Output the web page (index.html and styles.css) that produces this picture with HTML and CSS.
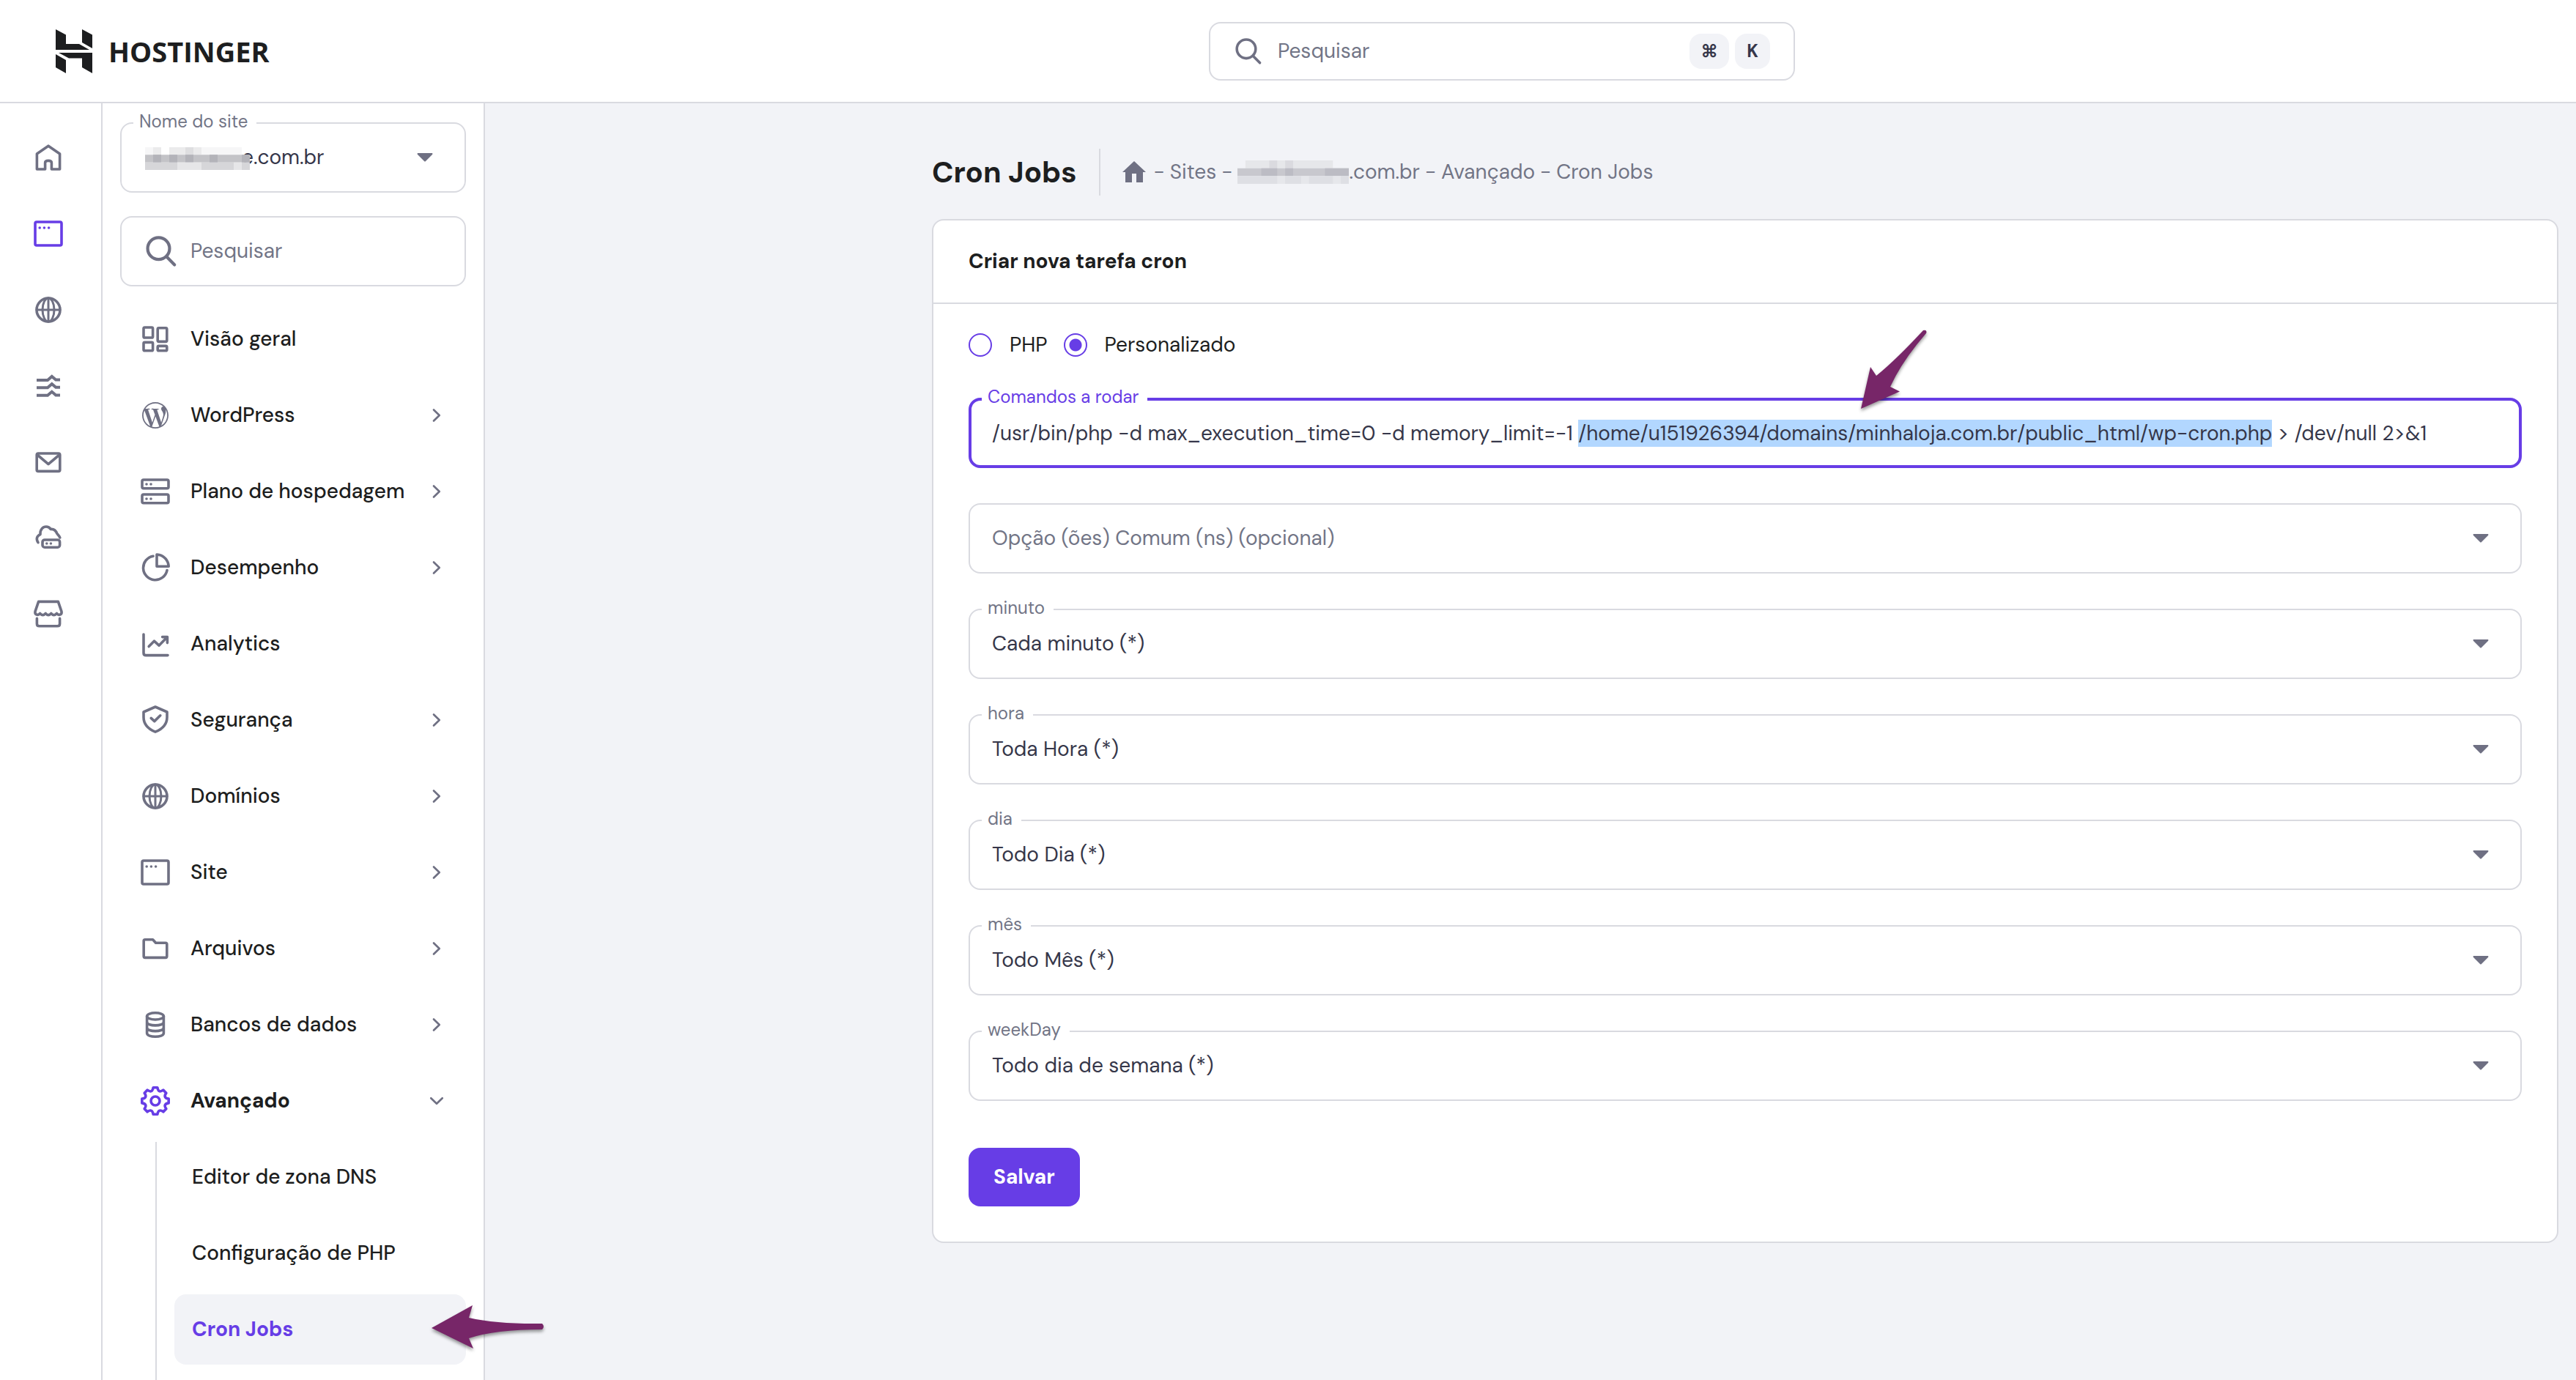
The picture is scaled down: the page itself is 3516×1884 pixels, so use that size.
FILE: index.html
```html
<!DOCTYPE html>
<html lang="pt-BR">
<head>
    <meta charset="UTF-8">
    <meta name="viewport" content="width=device-width, initial-scale=1.0">
    <title>Cron Jobs</title>
    <link rel="stylesheet" href="styles.css">
</head>
<body>

    <!-- Shared icons -->
    <svg class="sprite" aria-hidden="true">
        <symbol id="i-search" viewBox="0 0 24 24"><circle cx="10.5" cy="10.4" r="6.4"/><path d="M15.2 15.2l4.6 4.7"/></symbol>
        <symbol id="i-window" viewBox="0 0 24 24"><rect x="3" y="4" width="18" height="16" rx="1"/><g class="dot"><circle cx="6.1" cy="8" r=".9"/><circle cx="9.2" cy="8" r=".9"/><circle cx="12.3" cy="8" r=".9"/></g></symbol>
        <symbol id="i-globe" viewBox="0 0 24 24"><circle cx="12" cy="12" r="8"/><g class="thin"><ellipse cx="12" cy="12" rx="4" ry="8"/><path d="M12 4v16M4 12h16"/></g></symbol>
        <symbol id="i-right" viewBox="0 0 24 24"><path d="M9 6.4l5.8 5.6L9 17.6"/></symbol>
        <symbol id="i-down" viewBox="0 0 24 24"><path d="M6.2 9.2l5.8 5.6 5.8-5.6"/></symbol>
    </svg>

    <header class="topbar">
        <a href="#" class="logo">
            <svg viewBox="0 0 50 60" aria-hidden="true">
                <path d="M0 0l14 7.5V20h18l14 8H0zM36 0l14 7.5V26l-14-8zM4 32h46v28l-14-8V39.500H18zM0 34l14 8v18L0 52z"/>
            </svg>
            HOSTINGER
        </a>
        <div class="top-search">
            <svg class="icon"><use href="#i-search"/></svg>
            <input type="text" placeholder="Pesquisar" aria-label="Pesquisar">
            <kbd class="cmd">⌘</kbd>
            <kbd>K</kbd>
        </div>
    </header>

    <div class="layout">
        <nav class="rail" aria-label="Principal">
            <a href="#" aria-label="Início"><svg class="icon" viewBox="0 0 24 24"><path d="M4.2 20V9.5L12 4.1l7.8 5.4V20h-5.600v-4.400c0-.9-.8-1.400-2.200-1.400s-2.200.5-2.200 1.400V20z"/></svg></a>
            <a href="#" class="active" aria-label="Sites"><svg class="icon"><use href="#i-window"/></svg></a>
            <a href="#" aria-label="Domínios"><svg class="icon"><use href="#i-globe"/></svg></a>
            <a href="#" aria-label="Horizons"><svg class="icon" viewBox="0 0 24 24"><path class="flat" d="M4 8h7.500l2.900-2.500L17.100 7.800H20M4 13.100h7.500l2.900-2.500 2.700 2.300H20M4 18.400h7.500l2.900-2.500 2.700 2.300H20"/></svg></a>
            <a href="#" aria-label="Emails"><svg class="icon" viewBox="0 0 24 24"><rect x="4.100" y="6" width="15.800" height="12.200" rx="1"/><path d="M4.500 7l7.500 6.300L19.500 7"/></svg></a>
            <a href="#" aria-label="VPS"><svg class="icon" viewBox="0 1 24 24"><path d="M5 15.800C3.500 13.400 4 11.400 6.500 10.300 6.300 6.700 8.400 5 10.500 5c1.400 0 2.500.8 3.100 1.700 2.400-.3 3.500 1 4.300 3 1 1.100 1.700 1.800 2 2.800"/><rect x="8" y="14" width="11.800" height="5.100" rx="1.500"/><g class="dot"><circle cx="10.900" cy="16.500" r=".9"/><circle cx="13.700" cy="16.500" r=".9"/></g></svg></a>
            <a href="#" aria-label="Marketplace"><svg class="icon" viewBox="0 0 24 24"><path d="M5.300 3.200h13.400l2.300 6.700c.4 2.300-2 3-3.300 1.300-1.200 1.500-2.600 1.500-3.800 0-1.200 1.500-2.600 1.500-3.800 0-1.200 1.500-2.600 1.500-3.800 0-1.300 1.700-3.700 1-3.300-1.300zM4.200 14.700v3.500q0 1.700 1.700 1.700h12.200q1.700 0 1.700-1.700v-3.500"/></svg></a>
        </nav>

        <aside class="panel">
            <div class="field site-field">
                <label for="site">Nome do site</label>
                <select id="site"><option>e.com.br</option></select>
                <svg class="mask" viewBox="0 0 13 3" preserveAspectRatio="none" aria-hidden="true">
                    <path fill="#f6f6f7" d="M0 0h2v1H0zM7 0h5v1H7z"/><path fill="#ebebec" d="M1 0h1v1H1zM3 0h2v1H3zM6 0h1v1H6z"/><path fill="#dedee0" d="M5 0h1v1H5z"/>
                    <path fill="#c3c3c7" d="M0 1h13v1H0z"/><path fill="#b3b3b9" d="M1 1h1v1H1zM3 1h1v1H3zM5 1h1v1H5zM8 1h1v1H8zM12 1h1v1h-1z"/>
                    <path fill="#d6d6d9" d="M0 2h13v1H0z"/><path fill="#e6e6e8" d="M4 2h1v1H4zM5 2h1v1H5zM6 2h1v1H6zM11 2h1v1h-1z"/>
                </svg>
            </div>
            <div class="side-search">
                <svg class="icon"><use href="#i-search"/></svg>
                <input type="text" placeholder="Pesquisar" aria-label="Pesquisar no menu">
            </div>

            <nav class="menu" aria-label="Menu do site">
                <a href="#"><svg class="icon" viewBox="0 0 24 24"><rect x="4" y="4" width="6.300" height="7" rx=".8"/><rect x="13.600" y="4.400" width="6.300" height="9.300" rx=".8"/><rect x="4" y="14.200" width="6.300" height="5.700" rx=".8"/><rect x="13.600" y="16.700" width="6.300" height="3.200" rx=".8"/></svg><span>Visão geral</span></a>
                <a href="#"><svg class="icon solid" viewBox="-4 -4 32 32"><path d="M21.469 6.825c.84 1.537 1.318 3.3 1.318 5.175 0 3.979-2.156 7.456-5.363 9.325l3.295-9.527c.615-1.54.82-2.771.82-3.864 0-.405-.026-.78-.07-1.110m-7.981.105c.647-.03 1.232-.105 1.232-.105.582-.075.514-.93-.067-.899 0 0-1.755.135-2.880.135-1.064 0-2.850-.15-2.850-.15-.585-.03-.661.855-.075.885 0 0 .54.061 1.125.09l1.680 4.605-2.370 7.080L5.354 6.900c.649-.03 1.234-.1 1.234-.1.585-.075.516-.93-.065-.896 0 0-1.746.138-2.874.138-.2 0-.438-.008-.69-.015C4.911 3.150 8.235 1.215 12 1.215c2.809 0 5.365 1.072 7.286 2.833-.046-.003-.091-.009-.141-.009-1.060 0-1.812.923-1.812 1.914 0 .89.513 1.643 1.060 2.531.411.72.89 1.643.89 2.977 0 .915-.354 1.994-.821 3.479l-1.075 3.585-3.900-11.610.001.014zM12 22.784c-1.059 0-2.081-.153-3.048-.437l3.237-9.406 3.315 9.087c.024.053.05.101.078.149-1.120.393-2.325.609-3.582.609M1.211 12c0-1.564.336-3.050.935-4.390L7.290 21.709C3.694 19.960 1.212 16.271 1.211 12M12 0C5.385 0 0 5.385 0 12s5.385 12 12 12 12-5.385 12-12S18.615 0 12 0"/></svg><span>WordPress</span><svg class="chevron"><use href="#i-right"/></svg></a>
                <a href="#"><svg class="icon" viewBox="0 0 24 24"><rect x="3" y="4" width="18" height="5.900" rx="1"/><rect x="3" y="14" width="18" height="5.900" rx="1"/><g class="dot"><circle cx="6" cy="7" r=".9"/><circle cx="9" cy="7" r=".9"/><circle cx="6" cy="17" r=".9"/><circle cx="9" cy="17" r=".9"/></g></svg><span>Plano de hospedagem</span><svg class="chevron"><use href="#i-right"/></svg></a>
                <a href="#"><svg class="icon" viewBox="0 0 24 24"><path d="M13 3v8.100h8.100C20.800 6.600 17.500 3.300 13 3zM10.500 4.100a8.200 8.200 0 1 0 9.500 9.700"/></svg><span>Desempenho</span><svg class="chevron"><use href="#i-right"/></svg></a>
                <a href="#"><svg class="icon" viewBox="0 0 24 24"><path d="M4 5.500v12.700q0 1.600 1.600 1.600H20.500M7.600 13.800l3.600-3.700 3.300 3L20 7.500M16.800 7.300h3.400v4"/></svg><span>Analytics</span></a>
                <a href="#"><svg class="icon" viewBox="0 0 24 24"><path d="M12 3l8 3.500v3.600c0 4.800-3 7.900-8 10-5-2.100-8-5.200-8-10V6.500zM9.100 10.700l2.300 2.100 4-3.900"/></svg><span>Segurança</span><svg class="chevron"><use href="#i-right"/></svg></a>
                <a href="#"><svg class="icon"><use href="#i-globe"/></svg><span>Domínios</span><svg class="chevron"><use href="#i-right"/></svg></a>
                <a href="#"><svg class="icon"><use href="#i-window"/></svg><span>Site</span><svg class="chevron"><use href="#i-right"/></svg></a>
                <a href="#"><svg class="icon" viewBox="0 0 24 24"><path d="M5 5.900h5.300l2 2.200H19q.9 0 .9.900v8.300q0 .9-.9.900H5q-.9 0-.9-.9V6.800q0-.9.9-.9z"/></svg><span>Arquivos</span><svg class="chevron"><use href="#i-right"/></svg></a>
                <a href="#"><svg class="icon" viewBox="0 0 24 24"><ellipse cx="12" cy="6.200" rx="5.700" ry="2.300"/><path d="M6.300 6.200v11.600c0 3.100 11.400 3.100 11.400 0V6.200M6.300 10.100c0 3.100 11.400 3.100 11.400 0M6.300 14c0 3.100 11.400 3.100 11.400 0"/></svg><span>Bancos de dados</span><svg class="chevron"><use href="#i-right"/></svg></a>
                <a href="#" class="open"><svg class="icon" viewBox="0 0 24 24"><path d="M21.090 10.560V13.440Q17.030 14.080 19.440 17.410L17.410 19.440Q14.080 17.030 13.440 21.090H10.560Q9.920 17.030 6.590 19.440L4.560 17.410Q6.970 14.080 2.910 13.440V10.560Q6.970 9.920 4.560 6.590L6.590 4.560Q9.920 6.970 10.560 2.910H13.440Q14.080 6.970 17.410 4.560L19.440 6.590Q17.030 9.920 21.090 10.560z"/><circle cx="12" cy="12" r="3"/></svg><span>Avançado</span><svg class="chevron"><use href="#i-down"/></svg></a>
                <div class="submenu">
                    <a href="#">Editor de zona DNS</a>
                    <a href="#">Configuração de PHP</a>
                    <a href="#" class="current" aria-current="page">Cron Jobs
                        <svg class="arrow arrow-menu" viewBox="0 0 160 64" aria-hidden="true"><path d="M1 34L57 3l-5 17q40 9 100 8 4 4 0 8-64 0-100 12l6 14z"/></svg>
                    </a>
                </div>
            </nav>
        </aside>

        <main class="content">
            <div class="page-head">
                <h1>Cron Jobs</h1>
                <div class="crumbs">
                    <a href="#" aria-label="Início"><svg class="home" viewBox="0 0 32 30"><path d="M16 0L0 15h4v14h9V17h6v12h9V15h4z"/></svg></a>
                    <span>-</span>
                    <a href="#">Sites</a>
                    <span>-</span>
                    <a href="#"><svg class="crumb-mask" viewBox="0 0 14 3" preserveAspectRatio="none" aria-hidden="true">
                        <path fill="#e6e7ea" d="M1 0h11v1H1z"/><path fill="#dadadf" d="M4 0h1v1H4zM6 0h1v1H6z"/>
                        <path fill="#c8c8ce" d="M0 1h14v1H0z"/><path fill="#bcbcc4" d="M3 1h2v1H3zM6 1h1v1H6zM11 1h3v1h-3z"/>
                        <path fill="#dedfe4" d="M0 2h14v1H0z"/><path fill="#e6e7eb" d="M5 2h1v1H5zM8 2h1v1H8zM12 2h1v1h-1z"/>
                    </svg>.com.br</a>
                    <span>-</span>
                    <a href="#">Avançado</a>
                    <span>-</span>
                    <a href="#">Cron Jobs</a>
                </div>
            </div>

            <section class="card">
                <h2>Criar nova tarefa cron</h2>
                <form id="cronForm">
                    <div class="types">
                        <input type="radio" id="typePhp" name="type">
                        <label for="typePhp">PHP</label>
                        <input type="radio" id="typeCustom" name="type" checked>
                        <label for="typeCustom">Personalizado</label>
                    </div>

                    <div class="field focused">
                        <label for="command">Comandos a rodar</label>
                        <input type="text" id="command" name="command" spellcheck="false" value="/usr/bin/php -d max_execution_time=0 -d memory_limit=-1 /home/u151926394/domains/minhaloja.com.br/public_html/wp-cron.php &gt; /dev/null 2&gt;&amp;1">
                        <svg class="arrow arrow-command" viewBox="0 0 100 120" aria-hidden="true"><path d="M2 109L15 52l8 12Q50 42 87 2q6-1 4 4Q58 44 42 79l13 6.500z"/></svg>
                    </div>

                    <div class="field">
                        <select id="common" class="empty" aria-label="Opção (ões) Comum (ns) (opcional)"><option>Opção (ões) Comum (ns) (opcional)</option></select>
                    </div>
                    <div class="field">
                        <label for="minute">minuto</label>
                        <select id="minute"><option>Cada minuto (*)</option></select>
                    </div>
                    <div class="field">
                        <label for="hour">hora</label>
                        <select id="hour"><option>Toda Hora (*)</option></select>
                    </div>
                    <div class="field">
                        <label for="day">dia</label>
                        <select id="day"><option>Todo Dia (*)</option></select>
                    </div>
                    <div class="field">
                        <label for="month">mês</label>
                        <select id="month"><option>Todo Mês (*)</option></select>
                    </div>
                    <div class="field">
                        <label for="weekDay">weekDay</label>
                        <select id="weekDay"><option>Todo dia de semana (*)</option></select>
                    </div>

                    <button type="button">Salvar</button>
                </form>
            </section>
        </main>
    </div>

    <script>
        // Preselect the script path, the part that has to be edited
        const command = document.getElementById("command");
        const start = command.value.indexOf("/home/");
        const end = command.value.indexOf(" > ");
        command.focus();
        command.setSelectionRange(start, end);
    </script>

</body>
</html>
```
FILE: styles.css
```css
* {
    box-sizing: border-box;
}
body {
    margin: 0;
    min-height: 100vh;
    display: flex;
    flex-direction: column;
    background-color: #f2f3f7;
    color: #1d1e20;
    font-family: "DM Sans", Inter, sans-serif;
    font-size: 28px;
    line-height: 40px;
}
a {
    color: inherit;
    text-decoration: none;
}
input,
select,
button,
kbd {
    font: inherit;
}
.sprite {
    display: none;
}
.icon,
.chevron {
    flex: none;
    width: 48px;
    height: 48px;
    fill: none;
    stroke: currentColor;
    stroke-width: 1.8;
    stroke-linecap: round;
    stroke-linejoin: round;
    color: #6f7083;
}
.chevron {
    width: 32px;
    height: 32px;
    stroke-width: 2;
}
.dot,
.solid {
    fill: currentColor;
    stroke: none;
}
.thin {
    stroke-width: 1.5;
}
.flat {
    stroke-width: 2;
    stroke-linecap: butt;
    stroke-linejoin: miter;
}

/* Top bar */
.topbar {
    display: flex;
    align-items: center;
    height: 141px;
    padding-left: 76px;
    background-color: #fff;
    border-bottom: 2px solid #d9dae0;
}
.logo {
    flex: none;
    display: flex;
    align-items: center;
    gap: 22px;
    width: 1574px;
    font-family: "Open Sans", sans-serif;
    font-size: 38px;
    font-weight: 700;
}
.logo svg {
    width: 50px;
    height: 60px;
    fill: #1d1e20;
}
.top-search {
    display: flex;
    align-items: center;
    gap: 8px;
    width: 800px;
    height: 80px;
    padding: 0 32px 0 28px;
    border: 2px solid #d9dae0;
    border-radius: 16px;
}
.top-search input,
.side-search input {
    flex: 1;
    min-width: 0;
    padding: 0 8px;
    border: none;
    outline: none;
    background: none;
}
::placeholder {
    color: #727586;
    opacity: 1;
}
kbd {
    width: 48px;
    height: 48px;
    border-radius: 16px;
    background-color: #f2f3f7;
    color: #36374a;
    font-size: 24px;
    font-weight: 700;
    line-height: 48px;
    text-align: center;
}
.cmd {
    width: 54px;
}

/* Side navigation */
.layout {
    flex: 1;
    display: flex;
}
.rail {
    flex: none;
    display: flex;
    flex-direction: column;
    gap: 56px;
    width: 140px;
    padding: 50px 42px;
    background-color: #fff;
    border-right: 2px solid #d9dae0;
}
.rail a {
    height: 48px;
}
.active .icon,
.open .icon {
    color: #673de6;
}
.panel {
    flex: none;
    display: flex;
    flex-direction: column;
    width: 522px;
    padding: 26px 24px 0;
    background-color: #fff;
    border-right: 2px solid #d9dae0;
}
.side-search {
    display: flex;
    align-items: center;
    gap: 4px;
    height: 96px;
    margin: 32px 0 24px;
    padding: 0 26px;
    border: 2px solid #d9dae0;
    border-radius: 16px;
}
.side-search .icon {
    width: 56px;
    height: 56px;
}
.menu {
    flex: 1;
    display: flex;
    flex-direction: column;
    gap: 8px;
    font-weight: 500;
}
.menu a {
    display: flex;
    align-items: center;
    height: 96px;
    padding: 0 24px;
    border-radius: 16px;
}
.menu > a span {
    flex: 1;
    padding-left: 24px;
    white-space: nowrap;
}
.menu .open {
    font-weight: 700;
}
.submenu {
    flex: 1;
    display: flex;
    flex-direction: column;
    gap: 8px;
    margin-left: 48px;
    padding: 0 0 16px 24px;
    border-left: 2px solid #d9dae0;
}
.submenu .current {
    position: relative;
    background-color: #f2f3f7;
    color: #673de6;
    font-weight: 700;
}

/* Hand-drawn pointers over the page */
.arrow {
    position: absolute;
    fill: #772668;
    pointer-events: none;
    filter: drop-shadow(0 3px 2px rgba(0, 0, 0, 0.4));
}
.arrow-menu {
    top: 12px;
    right: -112px;
    width: 160px;
    height: 64px;
    z-index: 1;
}
.arrow-command {
    top: -94px;
    left: 1216px;
    width: 100px;
    height: 120px;
}

/* Page */
.content {
    flex: 1;
    min-width: 0;
    padding: 62px 24px 62px 610px;
}
.page-head {
    display: flex;
    align-items: center;
    height: 64px;
    margin-bottom: 32px;
}
h1 {
    margin: 0;
    padding-right: 30px;
    font-size: 40px;
    font-weight: 700;
}
.crumbs {
    display: flex;
    align-items: center;
    gap: 7px;
    height: 64px;
    padding-left: 30px;
    border-left: 2px solid #d9dae0;
    color: #727586;
}
.crumbs a {
    display: flex;
    align-items: center;
}
.home {
    width: 32px;
    height: 30px;
    margin-right: 4px;
    fill: #6f7083;
}
.crumb-mask {
    width: 152px;
    height: 32px;
}
.card {
    background-color: #fff;
    border: 2px solid #d9dae0;
    border-radius: 16px;
}
h2 {
    margin: 0;
    padding: 36px 48px;
    border-bottom: 2px solid #d9dae0;
    font-size: 28px;
    font-weight: 700;
}
form {
    display: flex;
    flex-direction: column;
    gap: 48px;
    padding: 40px 48px 48px;
}
.types {
    display: flex;
    align-items: center;
    height: 32px;
    margin-bottom: 8px;
}
.types input {
    appearance: none;
    width: 32px;
    height: 32px;
    margin: 0 24px 0 0;
    border: 2px solid #673de6;
    border-radius: 50%;
}
.types input:checked {
    background: radial-gradient(#673de6 8px, #fff 9px);
}
.types label {
    margin-right: 22px;
}
.field {
    position: relative;
}
.field label {
    position: absolute;
    top: -16px;
    left: 18px;
    padding: 0 12px 0 8px;
    background-color: #fff;
    color: #727586;
    font-size: 24px;
    line-height: 30px;
}
.field input,
.field select {
    appearance: none;
    display: block;
    width: 100%;
    height: 96px;
    padding: 0 80px 0 30px;
    border: 2px solid #d9dae0;
    border-radius: 16px;
    outline: none;
    background-color: #fff;
    color: #36374a;
}
.field select {
    background-image: url("data:image/svg+xml,%3Csvg xmlns='http://www.w3.org/2000/svg' width='22' height='12'%3E%3Cpath d='M1 0h20q1 1 0 2L12 11q-1 1-2 0L1 2Q0 1 1 0z' fill='%236f7083'/%3E%3C/svg%3E");
    background-repeat: no-repeat;
    background-position: right 43px center;
}
.field .empty {
    color: #727586;
}
.field.focused label {
    color: #673de6;
}
.field.focused input {
    padding: 0 28px;
    border: 4px solid #673de6;
}
::selection {
    background-color: #b2d7ff;
    color: #36374a;
}
.site-field select {
    padding-left: 164px;
}
.mask {
    position: absolute;
    top: 34px;
    left: 34px;
    width: 143px;
    height: 31px;
}
button {
    align-self: flex-start;
    height: 80px;
    margin-top: 16px;
    padding: 0 34px;
    border: none;
    border-radius: 16px;
    background-color: #673de6;
    color: #fff;
    font-weight: 700;
    cursor: pointer;
}
```
